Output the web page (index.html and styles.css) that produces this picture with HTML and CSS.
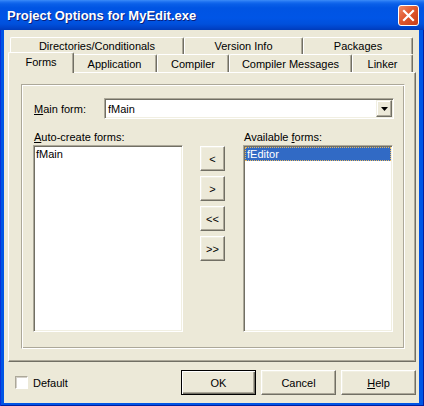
FILE: index.html
```html
<!DOCTYPE html>
<html>
<head>
<meta charset="utf-8">
<link rel="stylesheet" href="styles.css">
</head>
<body>
<div class="window">
  <div class="titlebar">
    <span class="title">Project Options for MyEdit.exe</span>
    <span class="close"><svg width="21" height="21" viewBox="0 0 21 21"><path d="M6 6 L15 15 M15 6 L6 15" stroke="#fff" stroke-width="2.2" stroke-linecap="square"/></svg></span>
  </div>
  <div class="client">
    <div class="tabrow back">
      <div class="tab t-dir">Directories/Conditionals</div>
      <div class="tab t-ver">Version Info</div>
      <div class="tab t-pkg">Packages</div>
    </div>
    <div class="tabrow front">
      <div class="tab sel t-forms">Forms</div>
      <div class="tab t-app">Application</div>
      <div class="tab t-comp">Compiler</div>
      <div class="tab t-msg">Compiler Messages</div>
      <div class="tab t-link">Linker</div>
    </div>
    <div class="panel">
      <div class="group">
        <div class="mainrow">
          <span class="mainlbl"><u>M</u>ain form:</span>
          <div class="combo">
            <span class="combotext">fMain</span>
            <span class="dropbtn"><svg width="7" height="4" viewBox="0 0 7 4"><path d="M0 0 H7 L3.5 4 Z" fill="#000"/></svg></span>
          </div>
        </div>
        <div class="lists">
          <div class="col">
            <div class="lbl"><u>A</u>uto-create forms:</div>
            <div class="listbox"><div class="item">fMain</div></div>
          </div>
          <div class="btncol">
            <button class="btn small">&lt;</button>
            <button class="btn small">&gt;</button>
            <button class="btn small">&lt;&lt;</button>
            <button class="btn small">&gt;&gt;</button>
          </div>
          <div class="col">
            <div class="lbl">Available <u>f</u>orms:</div>
            <div class="listbox"><div class="item selected">fEditor</div></div>
          </div>
        </div>
      </div>
    </div>
    <div class="bottom">
      <label class="check"><span class="box"></span>Default</label>
      <div class="buttons">
        <button class="btn wide default">OK</button>
        <button class="btn wide">Cancel</button>
        <button class="btn wide"><u>H</u>elp</button>
      </div>
    </div>
  </div>
</div>
</body>
</html>
```
FILE: styles.css
```css
* { box-sizing: border-box; }
body {
  margin: 0;
  font-family: "Liberation Sans", Arial, sans-serif;
  font-size: 11px;
  color: #000;
}
.window {
  width: 424px;
  height: 406px;
  display: flex;
  flex-direction: column;
  background: #0055E5;
  box-shadow: inset 1px 0 #0831D9, inset -1px 0 #001EA0, inset 0 -1px #001EA0;
}
.titlebar {
  height: 30px;
  flex: none;
  display: flex;
  align-items: center;
  justify-content: space-between;
  padding: 0 5px 0 7px;
  background: linear-gradient(180deg, #3C8CF8 0px, #1B6FF0 2px, #0A5FE8 4px, #0054E3 8px, #0055E6 18px, #0050DC 24px, #0042C8 28px, #003BB8 30px);
}
.title {
  color: #fff;
  font-weight: bold;
  font-size: 13px;
  text-shadow: 1px 1px #0A1E7A;
  padding-top: 1px;
}
.close {
  width: 21px;
  height: 21px;
  border: 1px solid #fff;
  border-radius: 3px;
  background: linear-gradient(135deg, #F08A66 0%, #E0582E 45%, #C83D18 100%);
  display: flex;
  align-items: center;
  justify-content: center;
}
.close svg { display: block; margin: -1px; }
.client {
  flex: 1;
  margin: 0 5px 3px 4px;
  background: #ECE9D8;
  padding: 7px 3px 0 4px;
  display: flex;
  flex-direction: column;
}
.tabrow {
  display: flex;
  padding-left: 2px;
  flex: none;
}
.tabrow.back { height: 17px; }
.tabrow.front { height: 18px; }
.tab {
  height: 100%;
  display: flex;
  align-items: center;
  justify-content: center;
  background: #ECE9D8;
  border-top: 1px solid #fff;
  border-left: 1px solid #fff;
  border-right: 1px solid #716F64;
  box-shadow: inset -1px 0 #ACA899;
  border-radius: 2px 2px 0 0;
}
.t-dir { width: 174px; }
.t-ver { width: 119px; }
.t-pkg { width: 110px; }
.t-forms { width: 62px; }
.t-app { width: 85px; }
.t-comp { width: 72px; }
.t-msg { width: 123px; }
.t-link { width: 61px; }
.tab.sel {
  position: relative;
  z-index: 1;
  width: 66px;
  height: 21px;
  margin: -2px -2px 0 -2px;
  align-self: flex-start;
  padding-bottom: 2px;
}
.panel {
  flex: none;
  height: 290px;
  border: 1px solid;
  border-color: #fff #716F64 #716F64 #fff;
  box-shadow: inset -1px -1px #ACA899;
  padding: 11px 10px 0 12px;
}
.group {
  height: 265px;
  border: 1px solid;
  border-color: #ACA899 #fff #fff #ACA899;
  box-shadow: inset 1px 1px #fff, inset -1px -1px #ACA899;
  padding: 13px 0 0 11px;
}
.mainrow {
  display: flex;
  align-items: center;
  height: 21px;
}
.mainlbl {
  width: 71px;
  padding-left: 1px;
}
.combo {
  width: 290px;
  height: 21px;
  background: #fff;
  border: 1px solid;
  border-color: #ACA899 #fff #fff #ACA899;
  box-shadow: inset 1px 1px #716F64, inset -1px -1px #F1EFE2;
  display: flex;
  align-items: center;
  justify-content: space-between;
  padding: 1px;
}
.combotext { padding-left: 2px; }
.dropbtn {
  width: 16px;
  height: 17px;
  background: #ECE9D8;
  border: 1px solid;
  border-color: #F1EFE2 #716F64 #716F64 #F1EFE2;
  box-shadow: inset -1px -1px #ACA899, inset 1px 1px #fff;
  display: flex;
  align-items: center;
  justify-content: center;
}
.dropbtn svg { display: block; }
.lists {
  display: flex;
  margin-top: 12px;
}
.col {
  width: 150px;
  display: flex;
  flex-direction: column;
}
.lbl {
  height: 13px;
  line-height: 13px;
  margin-bottom: 1px;
  padding-left: 1px;
}
.listbox {
  height: 187px;
  background: #fff;
  border: 1px solid;
  border-color: #ACA899 #fff #fff #ACA899;
  box-shadow: inset 1px 1px #716F64, inset -1px -1px #F1EFE2;
  padding: 1px;
}
.item {
  height: 14px;
  line-height: 14px;
  padding-left: 1px;
}
.item.selected {
  background: #316AC5;
  color: #fff;
  outline: 1px dotted #E8B860;
  outline-offset: -1px;
  padding-left: 2px;
}
.btncol {
  width: 25px;
  margin: 15px 18px 0 17px;
  display: flex;
  flex-direction: column;
  gap: 5px;
}
.btn {
  font: inherit;
  color: #000;
  background: #ECE9D8;
  border: 1px solid;
  border-color: #fff #716F64 #716F64 #fff;
  box-shadow: inset -1px -1px #ACA899, inset 1px 1px #F1EFE2;
  padding: 0;
  height: 25px;
}
.btn.small { width: 25px; }
.btn.wide { width: 75px; }
.btn.default {
  border: 1px solid #000;
  box-shadow: inset 1px 1px #fff, inset -1px -1px #716F64, inset -2px -2px #ACA899;
}
.bottom {
  display: flex;
  align-items: center;
  margin-top: 8px;
  height: 25px;
}
.check {
  display: flex;
  align-items: center;
  margin-left: 7px;
}
.box {
  width: 13px;
  height: 13px;
  background: #fff;
  border: 1px solid;
  border-color: #ACA899 #fff #fff #ACA899;
  box-shadow: inset 1px 1px #D4D0C8;
  margin-right: 5px;
}
.buttons {
  margin-left: auto;
  display: flex;
  gap: 5px;
}
```
